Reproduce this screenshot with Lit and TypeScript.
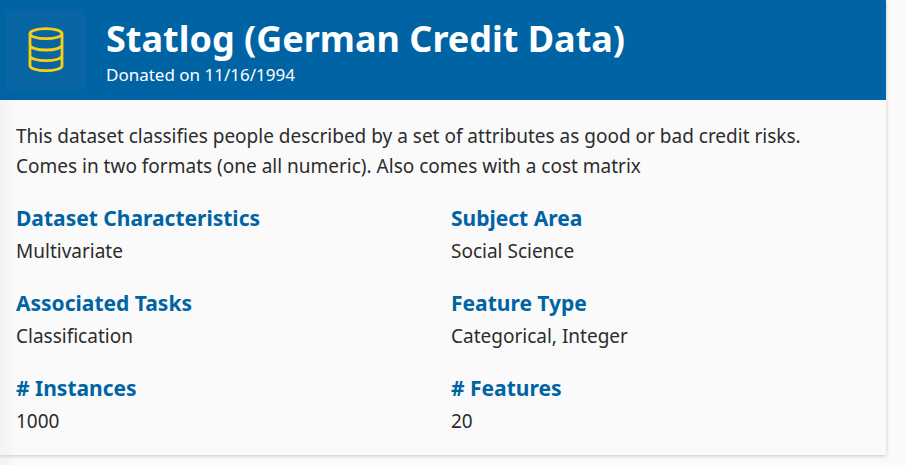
import { LitElement, html, css } from "lit";
import { customElement } from "lit/decorators.js";

interface Fact {
  label: string;
  value: string;
}

const FACTS: Fact[] = [
  { label: "Dataset Characteristics", value: "Multivariate" },
  { label: "Subject Area", value: "Social Science" },
  { label: "Associated Tasks", value: "Classification" },
  { label: "Feature Type", value: "Categorical, Integer" },
  { label: "# Instances", value: "1000" },
  { label: "# Features", value: "20" },
];

@customElement("app-root")
export class AppRoot extends LitElement {
  static styles = css`
    :host {
      display: block;
      min-height: 100vh;
      box-sizing: border-box;
      padding-right: 19px;
      background: linear-gradient(to right, #f3f3f3, #fafafa 16px);
      color: #2c2c2c;
      font-family: "Noto Sans", "Open Sans", sans-serif;
      font-size: 19px;
      line-height: 30px;
    }
    .card {
      box-shadow: 0 1px 4px rgba(0, 0, 0, 0.2);
      background: linear-gradient(to right, #f3f3f3, #fafafa 16px);
    }
    .head {
      display: flex;
      align-items: center;
      gap: 20px;
      height: 100px;
      padding-left: 6px;
      background: #0064a4;
      color: #fff;
    }
    .icon {
      display: block;
      width: 80px;
      height: 80px;
      background: #0865a3;
    }
    h1 {
      margin: 0;
      font-size: 36px;
      line-height: 49px;
      font-weight: 700;
    }
    .date {
      margin: 0;
      font-size: 17px;
      line-height: 23px;
    }
    .body {
      padding: 21px 16px 19px;
    }
    .summary {
      margin: 0;
    }
    dl {
      display: grid;
      grid-template-columns: 1fr 1fr;
      gap: 20px 16px;
      margin: 20px 0 0;
    }
    dt {
      color: #0064a4;
      font-size: 21px;
      line-height: 35px;
      font-weight: 700;
    }
    dd {
      margin: 0;
    }
  `;

  render() {
    return html`
      <article class="card">
        <header class="head">
          <svg class="icon" viewBox="0 0 80 80" fill="none" stroke="#f8cf13" stroke-width="2.8" aria-hidden="true">
            <ellipse cx="40" cy="23.7" rx="16" ry="5" />
            <path d="M24 23.7v32c0 2.8 7 5 16 5s16-2.2 16-5v-32M24 35c0 2.8 7 5 16 5s16-2.2 16-5M24 45.7c0 2.8 7 5 16 5s16-2.2 16-5" />
          </svg>
          <div>
            <h1>Statlog (German Credit Data)</h1>
            <p class="date">Donated on 11/16/1994</p>
          </div>
        </header>
        <div class="body">
          <p class="summary">
            This dataset classifies people described by a set of attributes as good or bad credit risks.<br />
            Comes in two formats (one all numeric). Also comes with a cost matrix
          </p>
          <dl>
            ${FACTS.map((f) => html`<div><dt>${f.label}</dt><dd>${f.value}</dd></div>`)}
          </dl>
        </div>
      </article>
    `;
  }
}
